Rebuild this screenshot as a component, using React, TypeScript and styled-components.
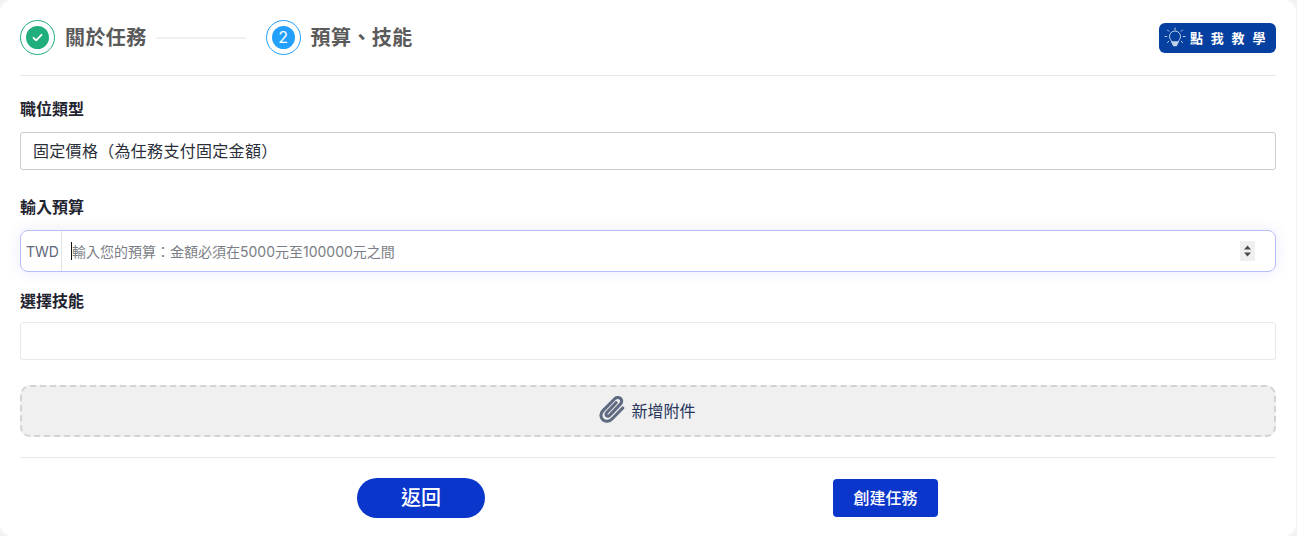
import React from "react";
import styled, { createGlobalStyle } from "styled-components";

const FONT = `Inter, "Noto Sans CJK TC", sans-serif`;

const GlobalStyle = createGlobalStyle`
  html, body {
    margin: 0;
    padding: 0;
    background: #f3f3f5;
    font-family: ${FONT};
  }
  * { box-sizing: border-box; }
`;

const Card = styled.div`
  width: 1296px;
  height: 536px;
  background: #fff;
  border-radius: 12px;
  padding: 20px 20px 0;
`;

const Header = styled.div`
  display: flex;
  align-items: center;
  justify-content: space-between;
  height: 56px;
  padding-bottom: 21px;
  border-bottom: 1px solid #e9e9eb;
`;

const Steps = styled.div`
  display: flex;
  align-items: center;
`;

const StepRing = styled.div<{ $color: string }>`
  width: 35px;
  height: 35px;
  border-radius: 50%;
  border: 1px solid ${(p) => p.$color};
  display: flex;
  align-items: center;
  justify-content: center;
  flex-shrink: 0;
`;

const StepDot = styled.div<{ $color: string }>`
  width: 23px;
  height: 23px;
  border-radius: 50%;
  background: ${(p) => p.$color};
  color: #fff;
  font-size: 16px;
  display: flex;
  align-items: center;
  justify-content: center;
`;

const StepTitle = styled.span`
  margin-left: 10px;
  padding-top: 2px;
  font-size: 20px;
  line-height: 28px;
  font-weight: 700;
  letter-spacing: 0.4px;
  color: #5a5a5a;
`;

const StepLine = styled.div`
  width: 90px;
  height: 2px;
  background: #f0f0f0;
  margin: 2px 20px 0 9px;
`;

const TutorialBadge = styled.div`
  width: 117px;
  height: 30px;
  margin-top: 1px;
  background: #0540a0;
  border-radius: 6px;
  display: flex;
  align-items: center;
  padding-left: 5px;
  color: #fff;
  font-size: 13px;
  font-weight: 700;
  letter-spacing: 7.8px;
`;

const BadgeText = styled.span`
  margin-left: 4px;
  white-space: nowrap;
`;

const Field = styled.div<{ $mt: number }>`
  margin-top: ${(p) => p.$mt}px;
`;

const Label = styled.div<{ $mb: number }>`
  font-size: 16px;
  line-height: 22px;
  font-weight: 600;
  color: #1f2430;
  margin-bottom: ${(p) => p.$mb}px;
`;

const SelectBox = styled.div`
  height: 38px;
  border: 1px solid #c9ccd2;
  border-radius: 3px;
  padding: 0 12px 2px;
  display: flex;
  align-items: center;
  font-size: 16px;
  letter-spacing: 0.3px;
  color: #2a2f3a;
`;

const BudgetBox = styled.div`
  height: 42px;
  border: 1px solid #b7bdfb;
  border-radius: 8px;
  box-shadow: 0 0 12px 2px rgba(130, 140, 250, 0.13);
  display: flex;
  align-items: stretch;
  background: #fff;
`;

const Currency = styled.div`
  width: 41px;
  flex-shrink: 0;
  border-right: 1px solid #e4e4e6;
  display: flex;
  align-items: center;
  justify-content: center;
  font-size: 14px;
  color: #5f677a;
  padding-left: 3px;
`;

const Placeholder = styled.div`
  flex: 1;
  display: flex;
  align-items: center;
  padding-left: 9px;
  font-size: 14px;
  color: #7b7e85;
`;

const Caret = styled.span`
  width: 1px;
  height: 18px;
  background: #111;
`;

const Spinner = styled.div`
  width: 15px;
  height: 20px;
  margin: 10px 20px 0 0;
  background: #efefef;
  display: flex;
  align-items: center;
  justify-content: center;
`;

const EmptyBox = styled.div`
  height: 38px;
  border: 1px solid #e9e9eb;
  border-radius: 3px;
`;

const AttachBox = styled.div`
  margin-top: 25px;
  height: 52px;
  background: #f0f0f0;
  border: 2px dashed #d3d3d3;
  border-radius: 10px;
  display: flex;
  align-items: center;
  justify-content: center;
  gap: 6px;
  padding: 0 1px 2px 0;
  font-size: 16px;
  color: #28355c;
`;

const Divider = styled.div`
  margin-top: 20px;
  height: 1px;
  background: #e9e9eb;
`;

const Actions = styled.div`
  margin-top: 20px;
  padding: 0 338px 0 337px;
  display: flex;
  align-items: center;
  justify-content: space-between;
`;

const BackButton = styled.button`
  width: 128px;
  height: 40px;
  border: none;
  border-radius: 20px;
  padding: 0 0 3px;
  background: #0a36cc;
  color: #fff;
  font-family: ${FONT};
  font-size: 20px;
  font-weight: 500;
`;

const CreateButton = styled.button`
  width: 105px;
  height: 38px;
  border: none;
  border-radius: 4px;
  padding: 0 0 3px;
  background: #0a36cc;
  color: #fff;
  font-family: ${FONT};
  font-size: 16px;
  font-weight: 500;
`;

const BulbIcon = () => (
  <svg width="22" height="22" viewBox="0 0 22 22" fill="none" stroke="#c4d3ea" strokeWidth="1" strokeLinecap="round">
    <path d="M7.6 14.5c-.2-1.500-2.100-2.600-2.100-5a5.500 5.500 0 0 1 11 0c0 2.400-1.900 3.500-2.100 5z" />
    <path d="M8 15.500h6M8.500 17h5M9.500 18.500h3" strokeWidth="1.300" />
    <path d="M11 1v1.500M3.500 3l1.300 1.300M18.500 3l-1.300 1.300M1 9.500h1.800M19.200 9.500H21M3.500 15.500l1.300-1.200M18.500 15.500l-1.300-1.200" />
  </svg>
);

const PaperclipIcon = () => (
  <svg width="26" height="28" viewBox="0 0 26 28" fill="none" stroke="#5f6b80" strokeWidth="3.100" strokeLinecap="round" strokeLinejoin="round">
    <path d="M23.800 12 13 23c-2.600 2.700-6.700 3.100-9.300.7-2.500-2.400-2.300-6.300.3-9L15.500 3c1.800-1.800 4.400-2 6-.5 1.700 1.600 1.500 4-.3 5.900L10.600 19.300c-1 1-2.300 1.100-3.100.3-.8-.8-.7-2.100.3-3.100l9.300-9.800" />
  </svg>
);

const App: React.FC = () => {
  return (
    <>
      <GlobalStyle />
      <Card>
        <Header>
          <Steps>
            <StepRing $color="#20ae7c">
              <StepDot $color="#20ae7c">
                <svg width="13" height="13" viewBox="0 0 13 13" fill="none" stroke="#fff" strokeWidth="1.800" strokeLinecap="round" strokeLinejoin="round">
                  <path d="M2.500 6.800 5.200 9.300 10.500 3.800" />
                </svg>
              </StepDot>
            </StepRing>
            <StepTitle>關於任務</StepTitle>
            <StepLine />
            <StepRing $color="#22a0fb">
              <StepDot $color="#22a0fb">2</StepDot>
            </StepRing>
            <StepTitle>預算、技能</StepTitle>
          </Steps>
          <TutorialBadge>
            <BulbIcon />
            <BadgeText>點我教學</BadgeText>
          </TutorialBadge>
        </Header>

        <Field $mt={22}>
          <Label $mb={12}>職位類型</Label>
          <SelectBox>固定價格（為任務支付固定金額）</SelectBox>
        </Field>

        <Field $mt={26}>
          <Label $mb={12}>輸入預算</Label>
          <BudgetBox>
            <Currency>TWD</Currency>
            <Placeholder>
              <Caret />
              輸入您的預算：金額必須在5000元至100000元之間
            </Placeholder>
            <Spinner>
              <svg width="9" height="16" viewBox="0 0 9 16" fill="#4a4a4a">
                <path d="M4.500 2.500 8 6.500H1zM1 9.500h7L4.500 13.500z" />
              </svg>
            </Spinner>
          </BudgetBox>
        </Field>

        <Field $mt={18}>
          <Label $mb={10}>選擇技能</Label>
          <EmptyBox />
        </Field>

        <AttachBox>
          <PaperclipIcon />
          新增附件
        </AttachBox>

        <Divider />

        <Actions>
          <BackButton>返回</BackButton>
          <CreateButton>創建任務</CreateButton>
        </Actions>
      </Card>
    </>
  );
};

export default App;
